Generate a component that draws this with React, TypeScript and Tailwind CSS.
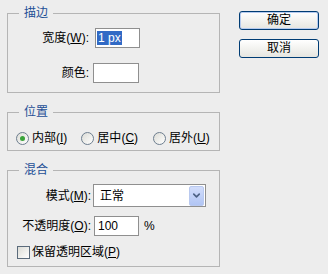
import { ChevronDown } from 'lucide-react'

function Radio({ checked, label, hotkey }: { checked?: boolean; label: string; hotkey: string }) {
  return (
    <label className="flex items-center gap-[3px]">
      <span className="flex h-[13px] w-[13px] items-center justify-center rounded-full border border-[#6d7e8f] bg-gradient-to-br from-[#dcdcd6] to-white">
        {checked && <span className="h-[5px] w-[5px] rounded-full bg-[#3aa33a]" />}
      </span>
      <span>
        {label}(<u>{hotkey}</u>)
      </span>
    </label>
  )
}

function Group({ title, className, children }: { title: string; className: string; children: React.ReactNode }) {
  return (
    <fieldset className={`border border-[#b5b5b5] ${className}`}>
      <legend className="ml-[11px] px-[5px] leading-[16px] text-[#1d4f96]">{title}</legend>
      {children}
    </fieldset>
  )
}

export default function App() {
  return (
    <div className="flex h-[274px] w-[328px] bg-[#ededed] pt-[5px] text-[12px] leading-[16px] text-black font-['Liberation_Sans','Noto_Sans_CJK_SC',sans-serif]">
      <div className="ml-[7px] flex w-[213px] flex-col gap-[11px]">
        {/* 描边 */}
        <Group title="描边" className="h-[88px]">
          <div className="mt-[7px] flex items-center">
            <span className="w-[81px] text-right">
              宽度(<u>W</u>):
            </span>
            <div className="ml-[6px] flex h-[20px] w-[45px] items-center border border-[#8f8f8f] bg-white pl-[1px]">
              <span className="bg-[#316ac5] px-[1px] leading-[14px] text-white">1 px</span>
            </div>
          </div>
          <div className="mt-[15px] flex items-center">
            <span className="w-[81px] text-right">颜色:</span>
            <div className="ml-[4px] h-[20px] w-[46px] border border-[#8f8f8f] bg-white" />
          </div>
        </Group>

        {/* 位置 */}
        <Group title="位置" className="h-[47px]">
          <div className="mt-[10px] flex items-center pl-[8px]">
            <Radio checked label="内部" hotkey="I" />
            <div className="ml-[14px]">
              <Radio label="居中" hotkey="C" />
            </div>
            <div className="ml-[15px]">
              <Radio label="居外" hotkey="U" />
            </div>
          </div>
        </Group>

        {/* 混合 */}
        <Group title="混合" className="h-[105px]">
          <div className="mt-[6px] flex items-center">
            <span className="w-[83px] text-right">
              模式(<u>M</u>):
            </span>
            <div className="ml-[2px] flex h-[23px] w-[113px] items-center border border-[#8f8f8f] bg-white pl-[6px] pr-[1px]">
              <span className="flex-1">正常</span>
              <span className="flex h-[20px] w-[15px] items-center justify-center rounded-[2px] border border-[#b9c9ef] bg-gradient-to-b from-[#d2ddfb] to-[#b1c5f4]">
                <ChevronDown size={11} strokeWidth={3.5} className="text-[#4d6185]" />
              </span>
            </div>
          </div>
          <div className="mt-[9px] flex items-center">
            <span className="w-[83px] text-right">
              不透明度(<u>O</u>):
            </span>
            <div className="ml-[3px] flex h-[20px] w-[45px] items-center border border-[#8f8f8f] bg-white pl-[3px]">
              100
            </div>
            <span className="ml-[5px]">%</span>
          </div>
          <label className="mt-[8px] flex items-center gap-[2px] pl-[9px]">
            <span className="h-[13px] w-[13px] border border-[#5b6b7b] bg-gradient-to-br from-[#dcdcd6] to-white" />
            <span>
              保留透明区域(<u>P</u>)
            </span>
          </label>
        </Group>
      </div>

      {/* buttons */}
      <div className="ml-[19px] flex w-[80px] flex-col gap-[9px] pt-[6px]">
        <button className="h-[19px] rounded-[3px] border border-[#003c74] bg-gradient-to-b from-white to-[#e6e6e0] leading-[15px] shadow-[inset_0_0_0_1px_#b6cbef]">
          确定
        </button>
        <button className="h-[19px] rounded-[3px] border border-[#003c74] bg-gradient-to-b from-white to-[#e6e6e0] leading-[15px]">
          取消
        </button>
      </div>
    </div>
  )
}
